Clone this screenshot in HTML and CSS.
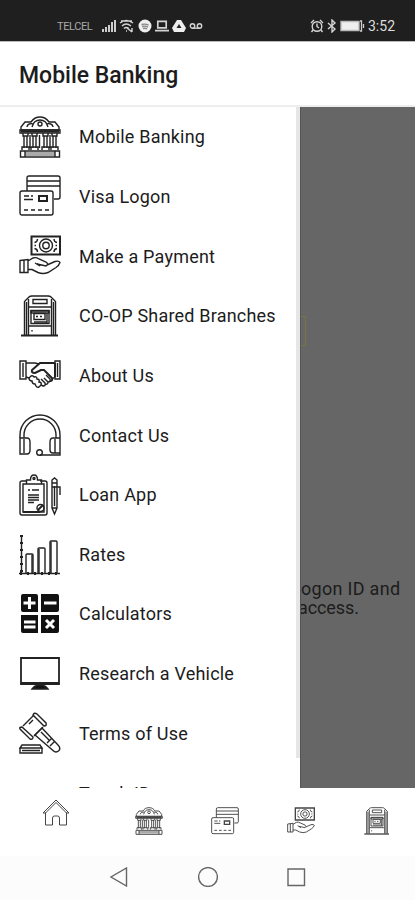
FILE: index.html
```html
<!DOCTYPE html>
<html lang="en">
<head>
	<meta charset="utf-8"/>
	<title>Mobile Banking</title>
	<link rel="stylesheet" href="styles.css">
</head>
<body>
	<!-- shared icons, used by the menu and the tab bar -->
	<svg class="defs">
		<symbol id="bank" viewBox="0 0 42 42">
			<path d="M2 14v-3l4-5h6c2-3 4-5 9-5s7 2 9 5h6l4 5v3zM8 11c0-3 4-4 6-3M34 11c0-3-4-4-6-3M13 11c1-4 3-7 8-7s7 3 8 7"/>
			<circle cx="21" cy="8" r="2"/>
			<path d="M1 14h40v3H1z"/><path d="M2 15.5h38" class="bold"/>
			<path d="M4 17v3h5v-3M13 17v3h5v-3M24 17v3h5v-3M33 17v3h5v-3M5 20v12M8 20v12M14 20v12M17 20v12M25 20v12M28 20v12M34 20v12M37 20v12M3 34v-3h7v3M12 34v-3h7v3M23 34v-3h7v3M32 34v-3h7v3M11 19v13M20.500 19v13M31 19v13"/>
			<path d="M1.500 35h39v6h-39z"/><path d="M6 36h30v4H6z" class="shade"/><path d="M6 35v6M36 35v6"/>
		</symbol>
		<symbol id="cards" viewBox="0 0 42 42">
			<path d="M8 16V3q0-2 2-2h29q2 0 2 2v19q0 2-2 2h-4M8 6h33M8 11h33"/>
			<rect x="1" y="16" width="33" height="24" rx="2"/>
			<path d="M20 21h8v5h-8z" class="bold"/>
			<path d="M5 21h5M12 21h2M5 24.500h9M5 35h4M12 35h4M19 35h4M26 35h4"/>
		</symbol>
		<symbol id="pay" viewBox="0 0 42 42">
			<path d="M12.500 1.500h28.500v18H12.500z" class="bold"/>
			<circle cx="27" cy="10.500" r="6.500"/><circle cx="27" cy="10.500" r="3.200"/>
			<path d="M15.500 7.500q3-.5 3-3.500M38 7.500q-3-.5-3-3.500M15.500 13.500q3 .5 3 3.500M38 13.500q-3 .5-3 3.500M15.500 10.500h1.500M36.500 10.500H38"/>
			<path d="M1 25.500l8-1v13H1zM5 25v12.500M9 26l5-3q3-1 6 1l7 3q3 2 0 4l-9-2M28 30l8-3.500q4-1 5 1-1 3-4 5l-8 5q-5 2-10 0l-6-3H9M16 28l5 3"/>
		</symbol>
		<symbol id="atm" viewBox="0 0 42 42">
			<path d="M5.500 40V6.500L10 2q1-1 3-1h16q2 0 3 1l4.500 4.500V40"/>
			<path d="M7.500 7v33M34.500 7v33M9.500 4v36M32.500 4v36M10 12h22M10 31h22"/>
			<path d="M14 4.500h14v4H14zM12 15.500h18v13H12z"/><path d="M15 18.500h11v6H15z"/>
			<path d="M12 16h18v2H12zM28 18v10M15 27h13M17 21.500h2M21 21.500h2"/>
			<path d="M13 35v1.500"/><path d="M2 40.500h37" class="bold"/>
		</symbol>
		<symbol id="home" viewBox="0 0 28 28">
			<path d="M3.500 13.500V26h7v-7q0-2 2-2h3q2 0 2 2v7h7V13.500M1 14L14 1l13 13M1 14l2.500 0L14 3.500 24.500 14H27"/>
		</symbol>
	</svg>

	<div class="status">
		<div class="left">
			<span class="carrier">TELCEL</span>
			<svg width="14" height="14" viewBox="0 0 14 14"><path d="M0 13v-3h2v3zM3 13V8h2v5zM6 13V6h2v7zM9 13V3h2v10zM12 13V1h2v12z" fill="#ccc"/></svg>
			<svg width="15" height="14" viewBox="0 0 15 14" class="line"><path d="M1 4q6-5 13 0M3 7q4-4 9 0M5 9.500q2-2 5 0M7 12h1M8 9l5 4M13 9v4M2 2h11"/></svg>
			<svg width="14" height="14" viewBox="0 0 14 14"><circle cx="7" cy="7" r="6.500" fill="#eee"/><path d="M3.500 5.500q4-1 7 .5M4 7.500q3-1 6 .5M5 9.500q2-.5 4 .3" fill="none" stroke="#888"/></svg>
			<svg width="14" height="14" viewBox="0 0 15 14" class="line"><path d="M3 2h9v7H3zM0 12h15" stroke-width="1.800"/></svg>
			<svg width="14" height="14" viewBox="0 0 14 14"><path d="M5 1h4l5 8-2 4H2L0 9z" fill="#eee"/><path d="M7 5l2.500 4h-5z" fill="#222"/></svg>
			<svg width="14" height="14" viewBox="0 0 14 14" class="line"><circle cx="3.500" cy="7" r="2.200"/><circle cx="10.500" cy="7" r="2.200"/><path d="M3.500 9.200h7"/></svg>
		</div>
		<div class="right">
			<svg width="14" height="14" viewBox="0 0 14 14" class="line"><circle cx="7" cy="7.500" r="4.800"/><path d="M7 4.500v3l2 1.500M1 4l3-3M13 4l-3-3M3 11l-1.500 2M11 11l1.500 2"/></svg>
			<svg width="10" height="14" viewBox="0 0 10 14" class="line"><path d="M1 4l7 6-3 3V1l3 3-7 6"/></svg>
			<svg width="25" height="14" viewBox="0 0 25 14"><path d="M1 2.500h18v9H1z" fill="#eee" stroke="#bbb"/><path d="M20 2h1.500v10H20M23.500 5v4" fill="none" stroke="#ccc" stroke-width="1.300"/></svg>
			<span class="time">3:52</span>
		</div>
	</div>

	<div class="header">Mobile Banking</div>

	<div class="main">
		<div class="drawer">
			<ul class="menu">
				<li><svg><use href="#bank"/></svg>Mobile Banking</li>
				<li><svg><use href="#cards"/></svg>Visa Logon</li>
				<li><svg><use href="#pay"/></svg>Make a Payment</li>
				<li><svg><use href="#atm"/></svg>CO-OP Shared Branches</li>
				<li>
					<svg viewBox="0 0 42 42">
						<path d="M1 7h6v18H1zM4 9v14M41 7h-5v18h5zM38.500 9v14"/>
						<path d="M7 9h9l4 1M7 23l3 1M36 23l-3 2"/>
						<path d="M36 9H21l-8 7q-1 3 3 3l6-3h3l8 8q1 3-2 3M36 9v14" class="bold"/>
						<path d="M10 24l2-2q2-1 3 1 3-1 3 2 3 0 2 3 3 0 2 3l-2 2q-2 1-3-1l-1-2q-3 0-3-3-3 0-3-3zM22 31l2 1q3 0 2-3l-4-4M26 30q3 1 3-2l-4-4M29 28q3 0 2-3l-4-4"/>
					</svg>About Us
				</li>
				<li>
					<svg viewBox="0 0 42 42">
						<path d="M1 24v-3a20 20 0 0 1 40 0v20H21M5 24v-3a16 16 0 0 1 32 0v3"/>
						<path d="M1 24h7q3 0 3 4v8q0 4-3 4H1zM5 25v14M41 24h-7q-3 0-3 4v8q0 3 3 3h7M36 25v14"/>
						<circle cx="20.500" cy="38.500" r="2.800"/>
					</svg>Contact Us
				</li>
				<li>
					<svg viewBox="0 0 42 42">
						<path d="M8 7H3Q1 7 1 9v30q0 2 2 2h23q2 0 2-2V9q0-2-2-2h-5"/>
						<path d="M8 10H4v28h21V10h-4M7.500 10V6h4q0-5 3.500-5t3.500 5h4v4z"/>
						<circle cx="15" cy="4.500" r="1"/>
						<path d="M9 16h2M13 16h7M9 21h11M9 23.500h11M9 26h11M9 28.500h6"/>
						<circle cx="21.500" cy="34" r="3.500"/><path d="M19 36l5-5M4 38h17" class="bold"/>
						<path d="M33 9V6l2.500-2L38 6v3M33 9h5v25l-2.500 6-2.500-6zM35.500 12v20M33 13h8v8M33 34h5"/>
					</svg>Loan App
				</li>
				<li>
					<svg viewBox="0 0 42 42">
						<path d="M2.500 2v39M0 40.500h41"/>
						<path d="M2.500 2v39M1 40.500h40" class="ticks"/>
						<path d="M7 40V22q0-1 1-1h5q1 0 1 1v18M19 40V16q0-1 1-1h5q1 0 1 1v24M31 40V9q0-1 1-1h5q1 0 1 1v31"/>
						<path d="M13 22v18M20 16v24M32 9v31"/>
					</svg>Rates
				</li>
				<li>
					<svg viewBox="0 0 42 42" class="solid">
						<path d="M4 1h13q2 0 2 2v16H4q-2 0-2-2V3q0-2 2-2zM22 1h16q2 0 2 2v14q0 2-2 2H22zM2 22h17v18H4q-2 0-2-2zM22 22h18v16q0 2-2 2H22z"/>
						<path d="M4.500 10h12M10.500 4v12M25 10h12.500M5 29h11.500M5 34h11.500M27 27l8 8M35 27l-8 8" class="sign"/>
					</svg>Calculators
				</li>
				<li>
					<svg viewBox="0 0 42 42">
						<path d="M2 5h38v26H2z" class="frame"/><path d="M2 30.500h38" class="base"/>
						<path d="M13 36q2-3 6-4h4q4 1 6 4z" class="fill"/>
					</svg>Research a Vehicle
				</li>
				<li>
					<svg viewBox="0 0 42 42">
						<path d="M14 3q1-3 4-1l9 9q1 3-2 3zM1 17q-1-2 2-2l11 10q0 3-3 2zM14 4L4 14M24 15l-9 9M10 12l4-4"/>
						<path d="M20 19l3-3 16 17q3 3 1 5.500-3 3-6 0L16 23zM28 31l5-5M31 34l5-5M22 20l8 8"/>
						<path d="M3 33h18l2 3H1zM1 36h22v5H1zM3 38.500h18"/>
					</svg>Terms of Use
				</li>
				<li class="noicon">Touch ID</li>
			</ul>
			<div class="scroll"></div>
		</div>
		<div class="page">
			<div class="field"></div>
			<p>ogon ID and</p>
			<p class="last">access.</p>
		</div>
	</div>

	<div class="tabs">
		<svg class="home"><use href="#home"/></svg>
		<svg><use href="#bank"/></svg>
		<svg><use href="#cards"/></svg>
		<svg><use href="#pay"/></svg>
		<svg><use href="#atm"/></svg>
	</div>

	<div class="nav">
		<svg viewBox="0 0 20 20"><path d="M17.500 1v18L2 10z"/></svg>
		<svg viewBox="0 0 20 20"><circle cx="10" cy="10" r="9.400"/></svg>
		<svg viewBox="0 0 20 20"><path d="M2 2h16.500v16.500H2z"/></svg>
	</div>
</body>
</html>
```
FILE: styles.css
```css
*{margin: 0;padding: 0;box-sizing: border-box;}
ul{list-style-type: none;}
body{
	width: 415px;
	height: 900px;
	display: flex;
	flex-direction: column;
	overflow: hidden;
	background: #fff;
	color: #1c1c1c;
	font-family: Roboto, "Liberation Sans", sans-serif;
}
svg{
	flex: none;
	fill: none;
	stroke: #222;
	stroke-width: 1.4;
}
.defs{
	width: 0;
	height: 0;
	position: absolute;
}
.bold{stroke-width: 2;}
.frame{stroke-width: 1.8;}
.base{stroke-width: 3;}
.shade{fill: #aaa;stroke: none;}
.fill{fill: #111;}

/* status bar */
.status{
	height: 41px;
	flex: none;
	padding: 11px 18px 0 57px;
	display: flex;
	justify-content: space-between;
	background: #1f1f1f;
	color: #ccc;
}
.status svg{stroke: none;}
.status .line{stroke: #d4d4d4;}
.left,.right{
	display: flex;
	align-items: center;
	height: 30px;
}
.left{gap: 3.2px;}
.right{gap: 3px;}
.carrier{
	width: 42px;
	font-size: 11px;
	letter-spacing: -.4px;
	color: #aaa;
}
.time{
	width: 29px;
	font-size: 14px;
	color: #ddd;
}

.header{
	height: 66px;
	flex: none;
	padding-left: 19px;
	line-height: 68px;
	font-size: 23px;
	font-weight: 500;
	border-top: 1px solid #bbb;
	border-bottom: 2px solid #eee;
}

.main{
	height: 681px;
	flex: none;
	display: flex;
	overflow: hidden;
}
.drawer{
	width: 300px;
	height: 681px;
	display: flex;
	overflow: hidden;
}
.menu{width: 296px;}
.menu li{
	height: 59.65px;
	padding-left: 18.5px;
	display: flex;
	align-items: center;
	gap: 18.5px;
	font-size: 18px;
	letter-spacing: .2px;
	white-space: nowrap;
}
.menu .noicon{
	padding: 2px 0 0 79px;
}
.menu svg{
	width: 42px;
	height: 42px;
}
.ticks{
	stroke-width: 3;
	stroke-dasharray: 2 5;
}
.solid{
	fill: #111;
	stroke: none;
}
.sign{
	stroke: #fff;
	stroke-width: 3;
}
.scroll{
	width: 4px;
	height: 651px;
	background: #e6e6e6;
}

.page{
	flex: 1;
	padding-top: 209px;
	background: #666;
	border-left: 1px solid #555;
	overflow: hidden;
}
.field{
	width: 5px;
	height: 30px;
	margin-bottom: 234px;
	border: 1px solid #7b7340;
	border-left: 0;
}
.page p{
	font-size: 18px;
	line-height: 18.5px;
	letter-spacing: .3px;
	white-space: nowrap;
}
.page .last{
	margin-left: -3px;
	letter-spacing: -.1px;
}

.tabs{
	height: 68px;
	flex: none;
	padding: 19px 24px 0 42px;
	display: flex;
	gap: 48px;
}
.tabs svg{
	width: 28px;
	height: 28px;
	stroke: #444;
}
.tabs .home{
	margin: -8px 17px 0 0;
	stroke-width: 1;
}

/* system buttons */
.nav{
	height: 44px;
	flex: none;
	padding-bottom: 2px;
	display: flex;
	justify-content: center;
	align-items: center;
	gap: 68.5px;
	background: #fcfcfc;
}
.nav svg{
	width: 20px;
	height: 20px;
	stroke: #666;
}
```
